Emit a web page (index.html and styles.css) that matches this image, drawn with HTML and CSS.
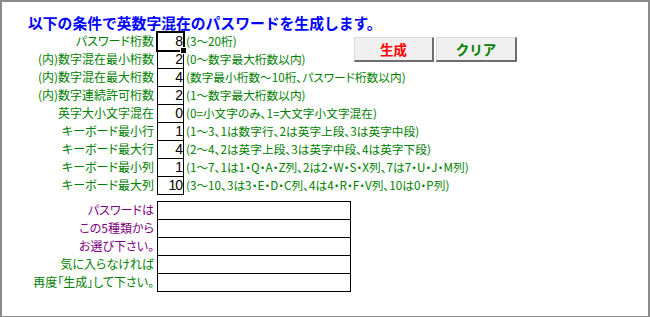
FILE: index.html
```html
<!DOCTYPE html>
<html lang="ja">
<head>
    <meta charset="UTF-8">
    <meta name="viewport" content="width=device-width, initial-scale=1.0">
    <title>パスワード生成</title>
    <link rel="stylesheet" href="styles.css">
</head>
<body>

    <div class="sheet">
        <h1 class="title">以下の条件で英数字混在のパスワードを生成します。</h1>

        <!-- 条件 -->
        <div class="params">
            <div class="label">パスワード桁数</div>
            <div class="cell selected">8</div>
            <div class="note">(3～20桁)</div>

            <div class="actions">
                <button class="btn make">生成</button>
                <button class="btn clear">クリア</button>
            </div>

            <div class="label">(内)数字混在最小桁数</div>
            <div class="cell">2</div>
            <div class="note">(0～数字最大桁数以内)</div>

            <div class="label">(内)数字混在最大桁数</div>
            <div class="cell">4</div>
            <div class="note wide">(数字最小桁数～10桁、パスワード桁数以内)</div>

            <div class="label">(内)数字連続許可桁数</div>
            <div class="cell">2</div>
            <div class="note wide">(1～数字最大桁数以内)</div>

            <div class="label">英字大小文字混在</div>
            <div class="cell">0</div>
            <div class="note wide">(0=小文字のみ、1=大文字小文字混在)</div>

            <div class="label">キーボード最小行</div>
            <div class="cell">1</div>
            <div class="note wide">(1～3、1は数字行、2は英字上段、3は英字中段)</div>

            <div class="label">キーボード最大行</div>
            <div class="cell">4</div>
            <div class="note wide">(2～4、2は英字上段、3は英字中段、4は英字下段)</div>

            <div class="label">キーボード最小列</div>
            <div class="cell">1</div>
            <div class="note wide">(1～7、1は1・Q・A・Z列、2は2・W・S・X列、7は7・U・J・M列)</div>

            <div class="label">キーボード最大列</div>
            <div class="cell">10</div>
            <div class="note wide">(3～10、3は3・E・D・C列、4は4・R・F・V列、10は0・P列)</div>
        </div>

        <!-- 結果 -->
        <div class="results">
            <div class="label purple">パスワードは</div>
            <div class="cell"></div>
            <div class="label purple">この5種類から</div>
            <div class="cell"></div>
            <div class="label purple">お選び下さい。</div>
            <div class="cell"></div>
            <div class="label">気に入らなければ</div>
            <div class="cell"></div>
            <div class="label">再度「生成」して下さい。</div>
            <div class="cell"></div>
        </div>
    </div>

</body>
</html>
```

FILE: styles.css
```css
/* 全体 */
* {
    margin: 0;
    padding: 0;
    box-sizing: border-box;
}

body {
    background: #fff;
    font-family: "Noto Sans CJK JP", "Noto Sans", sans-serif;
}

.sheet {
    width: 650px;
    height: 317px;
    border: 2px solid #8a8a8a;
    border-bottom-width: 1px;
    background: #fff;
}

/* タイトル */
.title {
    padding: 11px 0 0 26px;
    height: 30px;
    font-size: 14.8px;
    line-height: 19px;
    font-weight: bold;
    color: #0000ff;
    white-space: nowrap;
}

/* 条件の表 */
.params {
    display: grid;
    grid-template-columns: 155px 27px 170px auto;
    grid-auto-rows: 18px;
}

.label {
    grid-column: 1;
    padding-right: 3px;
    text-align: right;
    font-size: 12px;
    line-height: 18px;
    color: #008000;
    white-space: nowrap;
    font-feature-settings: "palt";
}

.label.purple {
    color: #800080;
}

.cell {
    grid-column: 2;
    align-self: start;
    height: 19px;
    border: 1px solid #000;
    text-align: right;
    padding-right: 1px;
    font-family: "Liberation Sans", sans-serif;
    font-size: 14px;
    line-height: 17px;
    letter-spacing: -1px;
    color: #000;
}

/* 選択中のセル */
.cell.selected {
    position: relative;
    box-shadow: 0 0 0 1px #000;
}

.cell.selected::after {
    content: "";
    position: absolute;
    right: -4px;
    bottom: -4px;
    width: 5px;
    height: 5px;
    background: #000;
    border: 1px solid #fff;
}

.note {
    grid-column: 3;
    padding-left: 2px;
    font-size: 11.7px;
    line-height: 18px;
    color: #008000;
    white-space: nowrap;
    font-feature-settings: "palt";
}

.note.wide {
    grid-column: 3 / -1;
}

/* ボタン */
.actions {
    grid-column: 4;
    grid-row: 1 / span 2;
    display: flex;
    gap: 2px;
    margin-top: 5px;
    align-self: start;
}

.btn {
    height: 25px;
    background: #f0f0f0;
    border: 1px solid #dadada;
    border-right: 2px solid #6e6e6e;
    border-bottom: 2px solid #6e6e6e;
    font-family: "Noto Sans CJK JP", sans-serif;
    font-size: 13.5px;
    font-weight: bold;
    line-height: 20px;
    cursor: pointer;
}

.make {
    width: 80px;
    color: #ff0000;
}

.clear {
    width: 81px;
    color: #008000;
}

/* 結果の欄 */
.results {
    display: grid;
    grid-template-columns: 155px 194px;
    grid-auto-rows: 18px;
    margin-top: 7px;
}
```
